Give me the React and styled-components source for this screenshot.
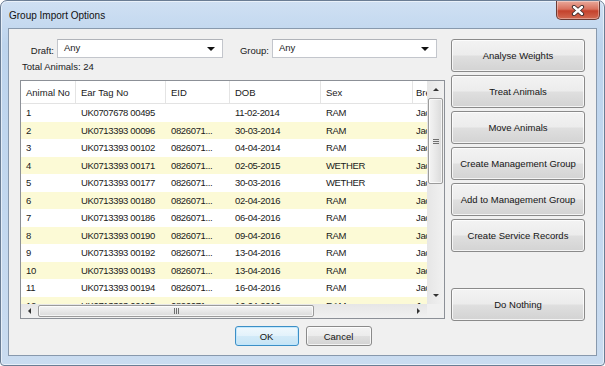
import React from 'react';
import styled, { createGlobalStyle } from 'styled-components';

const GlobalStyle = createGlobalStyle`
  html, body {
    margin: 0;
    padding: 0;
    background: #ffffff;
  }
  body {
    font-family: "Liberation Sans", Arial, sans-serif;
    font-size: 9.5px;
    color: #111;
  }
  * {
    box-sizing: border-box;
  }
`;

const columns = [
  { key: 'no', label: 'Animal No', width: 55 },
  { key: 'tag', label: 'Ear Tag No', width: 90 },
  { key: 'eid', label: 'EID', width: 64 },
  { key: 'dob', label: 'DOB', width: 91 },
  { key: 'sex', label: 'Sex', width: 92 },
  { key: 'breed', label: 'Breed', width: 70 },
];

const animals = [
  ['1', 'UK0707678 00495', '', '11-02-2014', 'RAM'],
  ['2', 'UK0713393 00096', '0826071...', '30-03-2014', 'RAM'],
  ['3', 'UK0713393 00102', '0826071...', '04-04-2014', 'RAM'],
  ['4', 'UK0713393 00171', '0826071...', '02-05-2015', 'WETHER'],
  ['5', 'UK0713393 00177', '0826071...', '30-03-2016', 'WETHER'],
  ['6', 'UK0713393 00180', '0826071...', '02-04-2016', 'RAM'],
  ['7', 'UK0713393 00186', '0826071...', '06-04-2016', 'RAM'],
  ['8', 'UK0713393 00190', '0826071...', '09-04-2016', 'RAM'],
  ['9', 'UK0713393 00192', '0826071...', '13-04-2016', 'RAM'],
  ['10', 'UK0713393 00193', '0826071...', '13-04-2016', 'RAM'],
  ['11', 'UK0713393 00194', '0826071...', '16-04-2016', 'RAM'],
  ['12', 'UK0713393 00195', '0826071...', '16-04-2016', 'RAM'],
];

const actions = [
  'Analyse Weights',
  'Treat Animals',
  'Move Animals',
  'Create Management Group',
  'Add to Management Group',
  'Create Service Records',
];

const gridCols = columns.map(c => c.width + 'px').join(' ');

const App = () => {
  return (
    <>
      <GlobalStyle />
      <Window>
        <TitleBar>
          <Title>Group Import Options</Title>
          <CloseButton>
            <svg width="14" height="11" viewBox="0 0 14 11">
              <path
                d="M3 2 L11 9 M11 2 L3 9"
                stroke="#3b2a2a"
                strokeWidth="4.2"
                strokeLinecap="round"
              />
              <path
                d="M3 2 L11 9 M11 2 L3 9"
                stroke="#ffffff"
                strokeWidth="2.4"
                strokeLinecap="round"
              />
            </svg>
          </CloseButton>
        </TitleBar>

        <Client>
          <MainRow>
            <LeftPanel>
              <FilterRow>
                <FieldLabel>Draft:</FieldLabel>
                <Combo>
                  <span>Any</span>
                  <DropArrow />
                </Combo>
                <FieldLabel>Group:</FieldLabel>
                <Combo>
                  <span>Any</span>
                  <DropArrow />
                </Combo>
              </FilterRow>
              <TotalLabel>Total Animals: 24</TotalLabel>

              <TableFrame>
                <Viewport>
                  <HeaderRow $cols={gridCols}>
                    {columns.map(col => (
                      <HeaderCell key={col.key}>{col.label}</HeaderCell>
                    ))}
                  </HeaderRow>
                  {animals.map((row, index) => (
                    <DataRow key={row[0]} $cols={gridCols} $alt={index % 2 === 1}>
                      {row.map((value, i) => (
                        <Cell key={i}>{value}</Cell>
                      ))}
                      <Cell $tight>Jacob</Cell>
                    </DataRow>
                  ))}
                </Viewport>

                <VScroll>
                  <ScrollButton>
                    <Arrow $dir="up" />
                  </ScrollButton>
                  <VThumb>
                    <Grip $vertical />
                  </VThumb>
                  <Track />
                  <ScrollButton>
                    <Arrow $dir="down" />
                  </ScrollButton>
                </VScroll>

                <HScroll>
                  <ScrollButton>
                    <Arrow $dir="left" />
                  </ScrollButton>
                  <HThumb>
                    <Grip />
                  </HThumb>
                  <Track />
                  <ScrollButton>
                    <Arrow $dir="right" />
                  </ScrollButton>
                </HScroll>
                <Corner />
              </TableFrame>
            </LeftPanel>

            <SidePanel>
              {actions.map(label => (
                <ActionButton key={label}>{label}</ActionButton>
              ))}
              <ActionButton $bottom>Do Nothing</ActionButton>
            </SidePanel>
          </MainRow>

          <Footer>
            <DialogButton $default $w={64}>OK</DialogButton>
            <DialogButton $w={66}>Cancel</DialogButton>
          </Footer>
        </Client>
      </Window>
    </>
  );
};

const Window = styled.div`
  width: 605px;
  height: 366px;
  display: flex;
  flex-direction: column;
  padding: 0 7px 9px 7px;
  border: 1px solid #6a7d94;
  border-radius: 7px 7px 4px 4px;
  background: linear-gradient(180deg, #cfe0f3 0%, #bdd4ed 12%, #c3d8ef 60%, #cadcf0 100%);
  box-shadow: inset 0 0 0 1px rgba(255, 255, 255, 0.55);
  overflow: hidden;
`;

const TitleBar = styled.div`
  height: 27px;
  flex-shrink: 0;
  display: flex;
  justify-content: space-between;
  align-items: flex-start;
  padding-left: 1px;
`;

const Title = styled.div`
  margin-top: 9px;
  font-size: 10px;
  color: #101010;
`;

const CloseButton = styled.div`
  width: 44px;
  height: 19px;
  margin-right: -3px;
  display: flex;
  align-items: center;
  justify-content: center;
  border: 1px solid #6b3b34;
  border-top: none;
  border-radius: 0 0 5px 5px;
  background: linear-gradient(180deg, #e9a99b 0%, #d8715e 45%, #c4422c 55%, #d26a52 100%);
  box-shadow: inset 0 0 0 1px rgba(255, 255, 255, 0.35);
`;

const Client = styled.div`
  flex: 1;
  min-height: 0;
  display: flex;
  flex-direction: column;
  border: 1px solid #8899ad;
  background: #f0f0f0;
  padding: 10px 10px 0 11px;
`;

const MainRow = styled.div`
  display: flex;
  gap: 6px;
`;

const LeftPanel = styled.div`
  width: 425px;
  display: flex;
  flex-direction: column;
`;

const FilterRow = styled.div`
  display: grid;
  grid-template-columns: 37px 166px 49px 165px;
  height: 19px;
  align-items: center;
`;

const FieldLabel = styled.div`
  text-align: right;
  padding-right: 3px;
  padding-top: 4px;
  color: #1a1a1a;
`;

const Combo = styled.div`
  height: 19px;
  display: flex;
  align-items: center;
  justify-content: space-between;
  padding: 0 7px 2px 6px;
  background: #ffffff;
  border: 1px solid #c3c6cc;
  border-top-color: #b0b3b9;
  color: #1a1a1a;
`;

const DropArrow = styled.span`
  width: 0;
  height: 0;
  margin-top: 2px;
  border-left: 4px solid transparent;
  border-right: 4px solid transparent;
  border-top: 4px solid #111;
`;

const TotalLabel = styled.div`
  height: 22px;
  padding: 3px 0 0 2px;
  color: #1a1a1a;
`;

const TableFrame = styled.div`
  height: 239px;
  display: grid;
  grid-template-columns: 1fr 17px;
  grid-template-rows: 1fr 14px;
  border: 1px solid #8c9097;
  background: #ffffff;
`;

const Viewport = styled.div`
  overflow: hidden;
`;

const HeaderRow = styled.div`
  display: grid;
  grid-template-columns: ${p => p.$cols};
  height: 23px;
  background: #ffffff;
  border-bottom: 1px solid #e3e3e3;
`;

const HeaderCell = styled.div`
  padding: 0 0 0 5px;
  display: flex;
  align-items: center;
  white-space: nowrap;
  overflow: hidden;
  border-right: 1px solid #e4e4e4;
  color: #1a1a1a;

  &:last-child {
    padding-left: 3px;
  }
`;

const DataRow = styled.div`
  display: grid;
  grid-template-columns: ${p => p.$cols};
  height: 17.5px;
  background: ${p => (p.$alt ? '#fcfad6' : '#ffffff')};
`;

const Cell = styled.div`
  padding-left: ${p => (p.$tight ? '3px' : '5px')};
  display: flex;
  align-items: center;
  white-space: nowrap;
  overflow: hidden;
  letter-spacing: -0.35px;
  color: #1a1a1a;
`;

const VScroll = styled.div`
  display: flex;
  flex-direction: column;
  background: linear-gradient(90deg, #e6e6e6, #f1f1f1);
`;

const HScroll = styled.div`
  display: flex;
  background: linear-gradient(180deg, #e6e6e6, #f1f1f1);
`;

const Corner = styled.div`
  background: #f0f0f0;
`;

const ScrollButton = styled.div`
  width: 17px;
  height: 17px;
  flex-shrink: 0;
  align-self: center;
  display: flex;
  align-items: center;
  justify-content: center;
`;

const arrowBorders = {
  up: 'border-left: 3px solid transparent; border-right: 3px solid transparent; border-bottom: 3.5px solid #333;',
  down: 'border-left: 3px solid transparent; border-right: 3px solid transparent; border-top: 3.5px solid #333;',
  left: 'border-top: 3px solid transparent; border-bottom: 3px solid transparent; border-right: 3.5px solid #333;',
  right: 'border-top: 3px solid transparent; border-bottom: 3px solid transparent; border-left: 3.5px solid #333;',
};

const Arrow = styled.span`
  width: 0;
  height: 0;
  ${p => arrowBorders[p.$dir]}
`;

const Track = styled.div`
  flex: 1;
`;

const VThumb = styled.div`
  height: 86px;
  margin: 0 1px;
  display: flex;
  align-items: center;
  justify-content: center;
  border: 1px solid #9b9b9b;
  border-radius: 2px;
  background: linear-gradient(90deg, #f4f4f4 0%, #e8e8e8 50%, #dadada 100%);
  box-shadow: inset 0 0 0 1px rgba(255, 255, 255, 0.7);
`;

const HThumb = styled.div`
  width: 276px;
  margin: 1px 0;
  display: flex;
  align-items: center;
  justify-content: center;
  border: 1px solid #9b9b9b;
  border-radius: 2px;
  background: linear-gradient(180deg, #f4f4f4 0%, #e8e8e8 50%, #dadada 100%);
  box-shadow: inset 0 0 0 1px rgba(255, 255, 255, 0.7);
`;

const Grip = styled.span`
  width: ${p => (p.$vertical ? '6px' : '5px')};
  height: ${p => (p.$vertical ? '5px' : '6px')};
  background: ${p =>
    p.$vertical
      ? 'repeating-linear-gradient(180deg, #6f6f6f 0 1px, transparent 1px 2px)'
      : 'repeating-linear-gradient(90deg, #6f6f6f 0 1px, transparent 1px 2px)'};
`;

const SidePanel = styled.div`
  width: 134px;
  display: flex;
  flex-direction: column;
  gap: 3px;
`;

const buttonFace = `
  border: 1px solid #8a8a8a;
  border-radius: 3px;
  background: linear-gradient(180deg, #f3f3f3 0%, #ececec 48%, #dfdfdf 52%, #d3d3d3 100%);
  box-shadow: inset 0 0 0 1px rgba(255, 255, 255, 0.75);
  color: #151515;
  font-family: "Liberation Sans", Arial, sans-serif;
  font-size: 9.5px;
  display: flex;
  align-items: center;
  justify-content: center;
  padding: 0;
`;

const ActionButton = styled.button`
  ${buttonFace}
  height: 33px;
  flex-shrink: 0;
  margin-top: ${p => (p.$bottom ? '33px' : '0')};
`;

const Footer = styled.div`
  display: flex;
  justify-content: center;
  gap: 7px;
  padding-top: 5px;
`;

const DialogButton = styled.button`
  ${buttonFace}
  width: ${p => p.$w}px;
  height: 20px;
  ${p =>
    p.$default &&
    `
    border-color: #3c8fc6;
    background: linear-gradient(180deg, #f0f8fd 0%, #e3f2fb 48%, #d2eaf8 52%, #c6e4f5 100%);
    box-shadow: inset 0 0 0 1px rgba(190, 230, 253, 0.9);
  `}
`;

export default App;
